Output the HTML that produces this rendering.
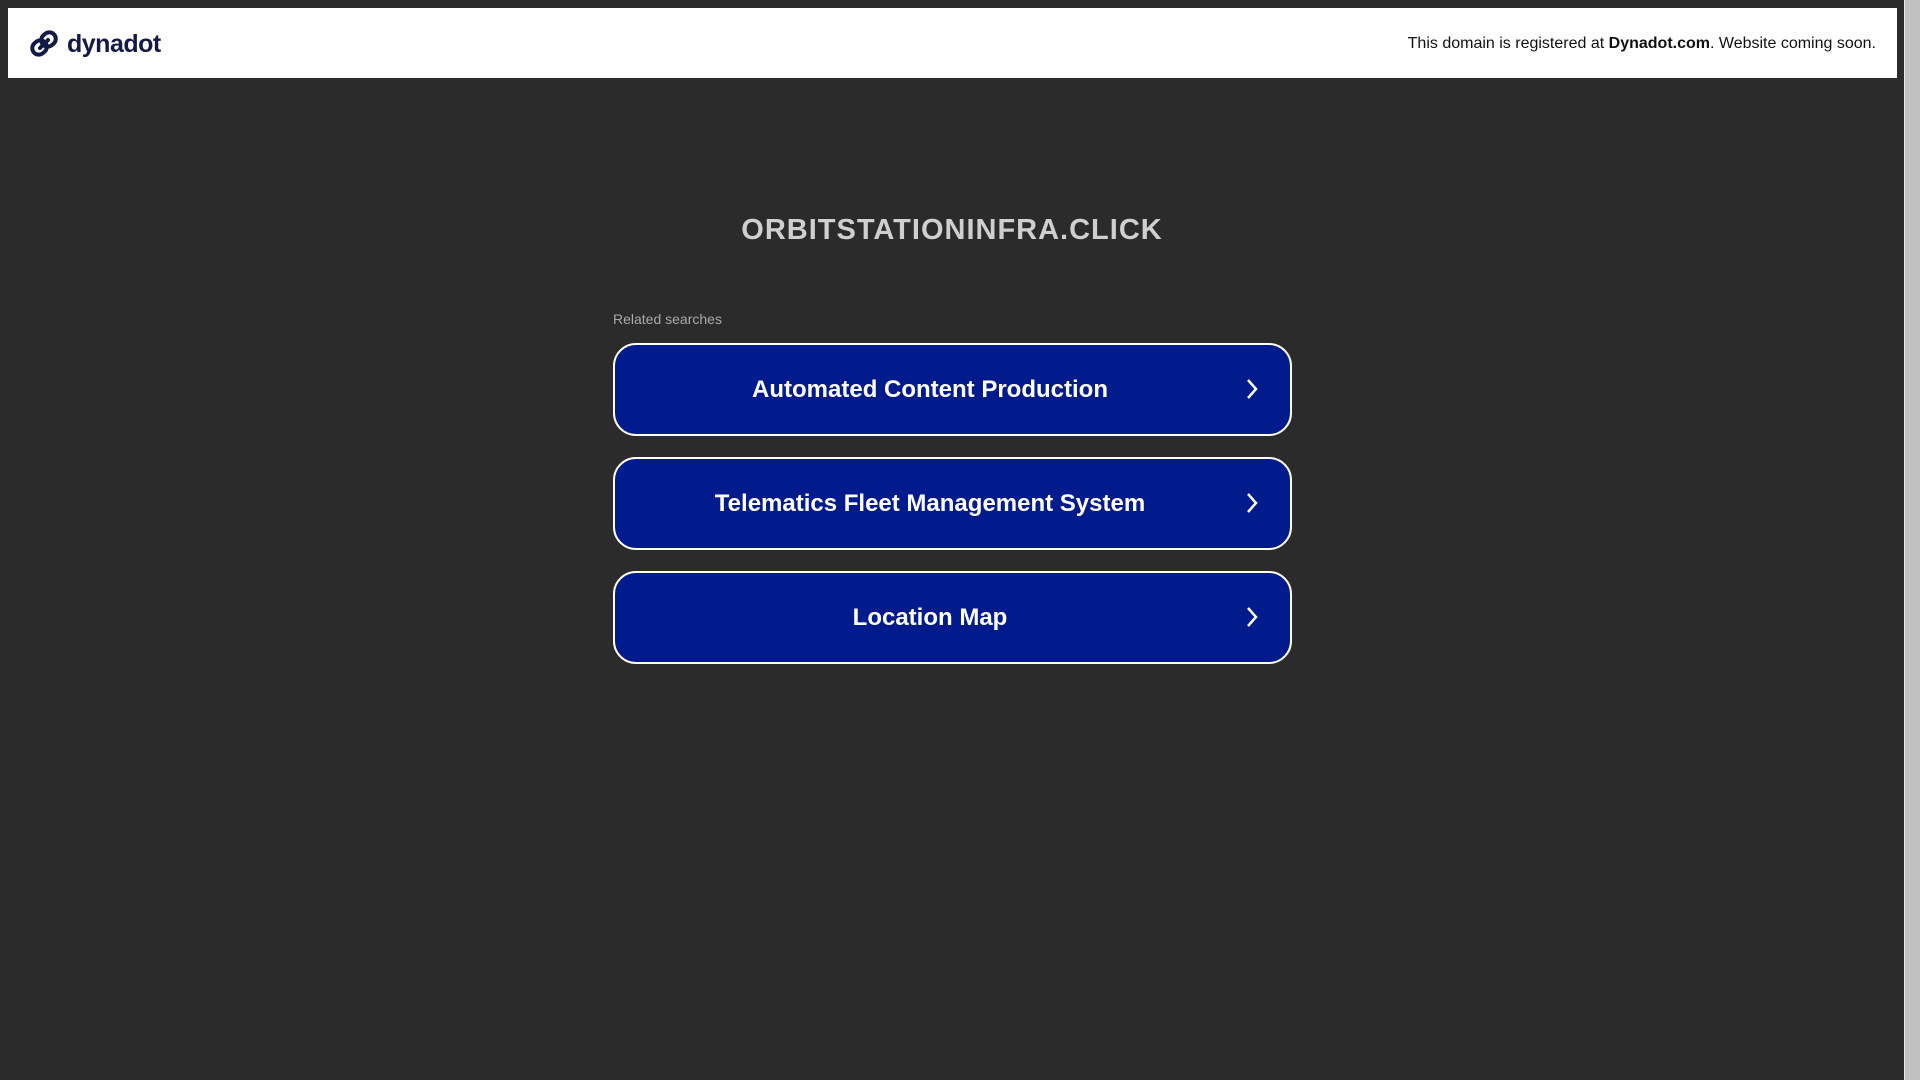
<!DOCTYPE html>
<html><head><meta charset="utf-8"><style>
html,body{margin:0;padding:0;width:1920px;height:1080px;overflow:hidden;background:#2b2b2b;font-family:"Liberation Sans",Arial,sans-serif;}
.hdr{position:absolute;left:8px;top:8px;width:1889px;height:70px;background:#fff;}
.logo{position:absolute;left:20px;top:20px;display:flex;align-items:center;}
.logo span{font-weight:bold;font-size:25px;color:#141a46;margin-left:7px;letter-spacing:-0.5px;line-height:30px}
.rt{position:absolute;right:21px;top:27px;font-size:16px;color:#111;}
.sb{position:absolute;left:1904px;top:0;width:16px;height:1080px;background:#c1c1c1;}
.sb:before{content:"";position:absolute;left:0;top:0;width:1px;height:1080px;background:#e8e8e8}
h1{position:absolute;left:0;width:1904px;top:214px;margin:0;text-align:center;font-size:29px;font-weight:bold;color:#cfcfcf;letter-spacing:1px}
.rel{position:absolute;left:613px;top:311px;font-size:14px;color:#a9a9a9}
.btn{position:absolute;left:613px;width:675px;height:89px;border:2px solid #fff;border-radius:23px;background:#011a8c;color:#fff;font-weight:bold;font-size:24px;display:flex;align-items:center;justify-content:center;box-sizing:content-box}
.btn .t{position:absolute;left:0;width:630px;text-align:center;}
.btn svg{position:absolute;left:630px;top:32px}
</style></head><body>
<div class="hdr">
<div class="logo"><svg width="32" height="32" viewBox="0 0 32 32"><g fill="none" stroke="#141a46" stroke-width="4" stroke-linecap="round"><path d="M12 20 L20 12"/><rect x="4" y="13" width="15" height="13" rx="6.5" transform="rotate(-40 11.5 19.5)"/><rect x="13" y="5" width="15" height="13" rx="6.5" transform="rotate(-40 20.5 11.5)"/></g></svg><span>dynadot</span></div>
<div class="rt">This domain is registered at <b>Dynadot.com</b>. Website coming soon.</div>
</div>
<div class="sb"></div>
<h1>ORBITSTATIONINFRA.CLICK</h1>
<div class="rel">Related searches</div>
<div class="btn" style="top:343px"><div class="t">Automated Content Production</div><svg width="14" height="24" viewBox="0 0 14 24"><path d="M3 3 L11 12 L3 21" fill="none" stroke="#fff" stroke-width="2.5"/></svg></div>
<div class="btn" style="top:457px"><div class="t">Telematics Fleet Management System</div><svg width="14" height="24" viewBox="0 0 14 24"><path d="M3 3 L11 12 L3 21" fill="none" stroke="#fff" stroke-width="2.5"/></svg></div>
<div class="btn" style="top:571px"><div class="t">Location Map</div><svg width="14" height="24" viewBox="0 0 14 24"><path d="M3 3 L11 12 L3 21" fill="none" stroke="#fff" stroke-width="2.5"/></svg></div>
</body></html>
